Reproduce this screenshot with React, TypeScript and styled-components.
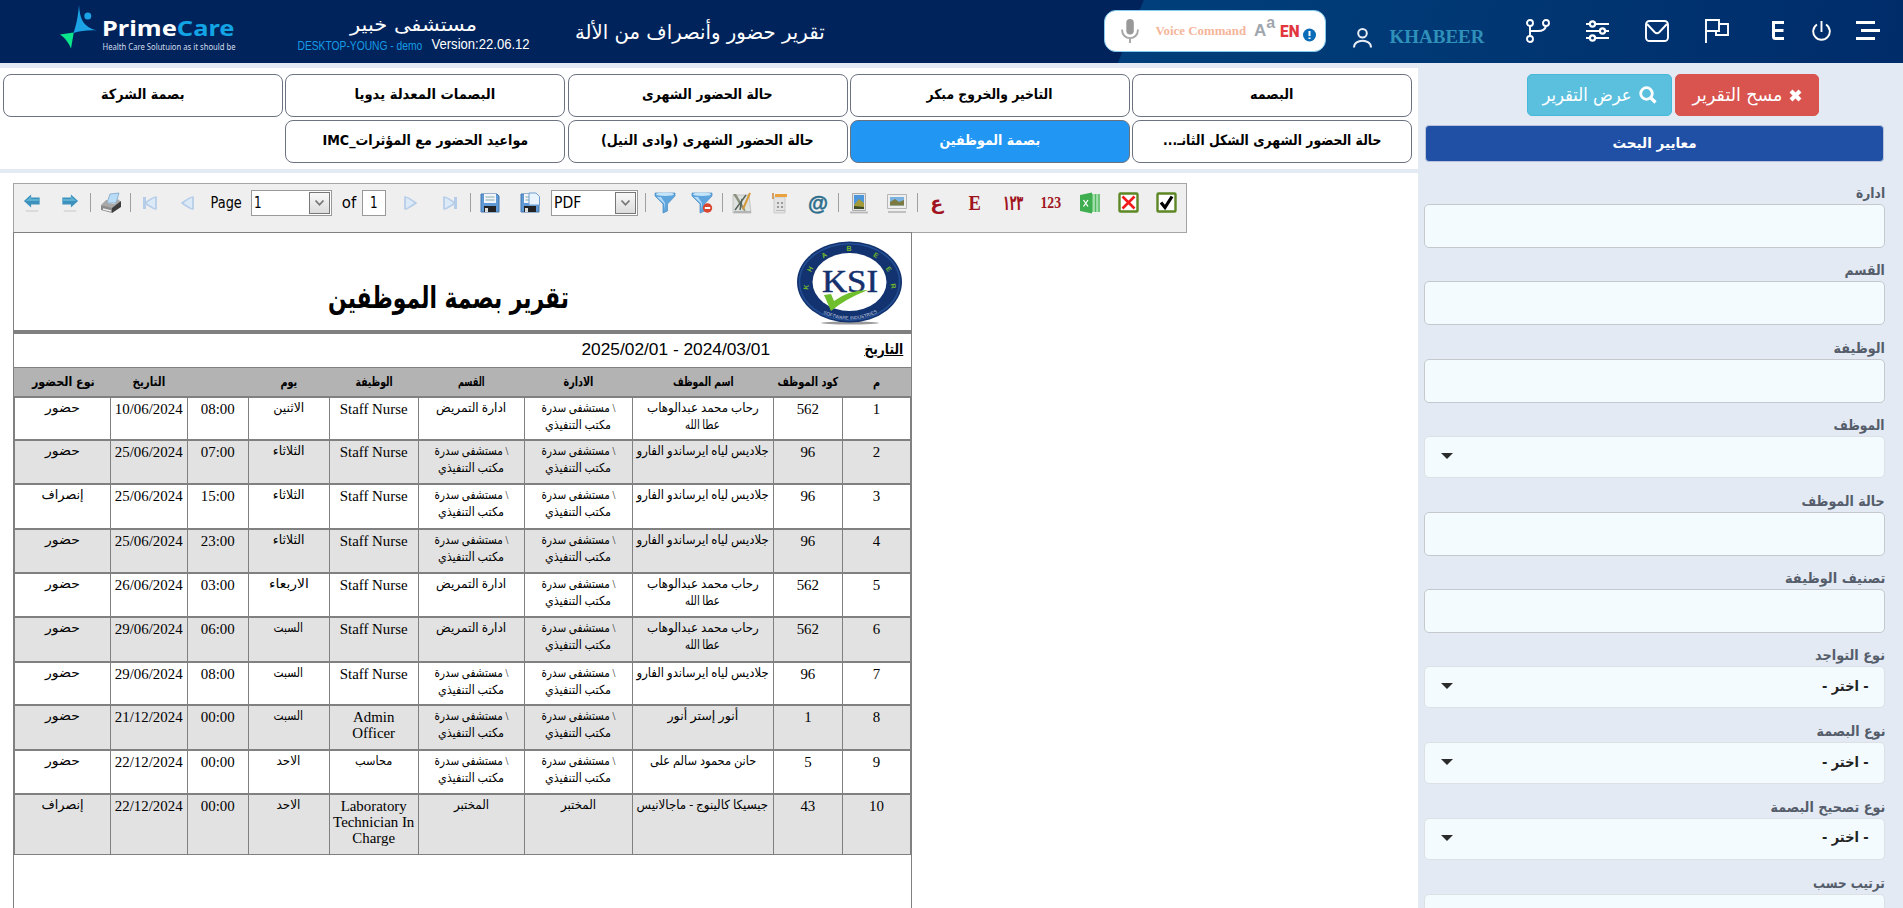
import React, { useLayoutEffect, useRef, useState } from "react";
import styled, { createGlobalStyle } from "styled-components";

const GlobalStyle = createGlobalStyle`
  * { box-sizing: border-box; }
  html, body { margin: 0; height: 100%; overflow: hidden; background: #e3eaf4; }
  body { font-family: "DejaVu Sans", sans-serif; color: #000; }
  button { font: inherit; cursor: pointer; padding: 0; }
  svg { display: block; flex: none; direction: ltr; }
`;

/* ---------- text squeezed to a given width ---------- */
const FitBox = styled.span<{ $w: number }>`
  display: inline-flex;
  justify-content: center;
  flex: none;
  width: ${(p) => p.$w}px;
  white-space: nowrap;
`;
const FitInner = styled.span`
  flex: none;
  display: inline-block;
`;
function Fit({ w, children }: { w: number; children: React.ReactNode }) {
  const ref = useRef<HTMLSpanElement>(null);
  const [scale, setScale] = useState(1);
  useLayoutEffect(() => {
    if (ref.current && ref.current.offsetWidth) setScale(w / ref.current.offsetWidth);
  }, [w]);
  return (
    <FitBox $w={w}>
      <FitInner ref={ref} style={{ transform: `scaleX(${scale})` }}>{children}</FitInner>
    </FitBox>
  );
}

/* ---------- header ---------- */
const Header = styled.header`
  height: 63px;
  display: flex;
  align-items: flex-start;
  background: linear-gradient(112.4deg, #00235c 0, #00235c 1057px, transparent 1058px),
    linear-gradient(100deg, #003f7b 1110px, #003a76 1350px, #002c6a 1880px);
  color: #fff;
`;
const Logo = styled.div`
  display: flex;
  width: 237px;
  padding-left: 59px;
  gap: 5px;
`;
const LogoText = styled.div`
  display: flex;
  flex-direction: column;
  padding-top: 13px;
  font-family: "Noto Sans", "Open Sans", sans-serif;
  strong { font-size: 22px; line-height: 28px; font-weight: 700; }
  em { color: #12a4e4; font-style: normal; }
  small { font-size: 9px; line-height: 11px; color: #d3dbe8; }
`;
const Hospital = styled.div`
  width: 233px;
  margin-left: 60px;
  padding-top: 13px;
  display: flex;
  flex-direction: column;
  align-items: center;
  font-size: 19px;
  line-height: 23px;
`;
const Versions = styled.div`
  display: flex;
  gap: 10px;
  height: 18px;
`;
const HostName = styled.span`
  color: #159ce4;
  font: 12px/20px "Liberation Sans", Arial, sans-serif;
`;
const Version = styled.span`
  font: 14px/16px "Liberation Sans", Arial, sans-serif;
`;
const PageTitle = styled.h1`
  margin: 0 279px 0 45px;
  font-size: 20px;
  font-weight: 400;
  line-height: 64px;
`;
const VoicePill = styled.div`
  width: 222px;
  height: 42px;
  margin-top: 10px;
  padding-left: 14px;
  display: flex;
  align-items: center;
  border: 1px solid #83cbef;
  border-radius: 12px;
  background: #fff;
`;
const VoiceLabel = styled.span`
  margin: 0 8px 0 14px;
  font: bold 13px/20px "Liberation Serif", serif;
  color: #f5b59a;
`;
const BigA = styled.span`
  display: flex;
  width: 26px;
  color: #9fa6ae;
  font: bold 17px/26px "Liberation Sans", sans-serif;
  sup { font-size: 16px; line-height: 10px; }
`;
const LangTag = styled.span`
  margin-right: 4px;
  color: #e2373f;
  font: 900 17px/22px Roboto, sans-serif;
`;
const User = styled.div`
  display: flex;
  margin-left: 27px;
  padding-top: 27px;
  gap: 18px;
  width: 173px;
  font: bold 18px/21px "Liberation Serif", serif;
  color: #2f90ba;
`;
const NavIcon = styled.div<{ $w: number }>`
  width: ${(p) => p.$w}px;
  padding-top: 19px;
`;

/* ---------- main frame ---------- */
const Frame = styled.div`
  display: flex;
  height: 845px;
`;
const Content = styled.main`
  width: 1418px;
  padding-top: 5px;
  display: flex;
  flex-direction: column;
  gap: 4px;
`;
const TabGrid = styled.nav`
  direction: rtl;
  height: 101px;
  padding: 6px 6px 6px 3px;
  background: #fff;
  display: grid;
  grid-template-columns: repeat(5, 1fr);
  grid-auto-rows: 43px;
  gap: 3px 2.25px;
`;
const Tab = styled.button<{ $active?: boolean }>`
  border: 1px solid #6b7280;
  border-radius: 8px;
  background: ${(p) => (p.$active ? "#2196f3" : "#fff")};
  color: ${(p) => (p.$active ? "#fff" : "#000")};
  font-size: 14px;
  font-weight: 700;
  line-height: 39px;
  padding-bottom: 2px;
`;
const Viewer = styled.section`
  flex: 1;
  background: #fff;
  padding: 10px 0 0 13px;
  min-height: 0;
`;

/* ---------- viewer toolbar ---------- */
const Toolbar = styled.div`
  width: 1174px;
  height: 50px;
  border: 1px solid #a5a5a5;
  background: #efefef;
  display: flex;
  align-items: center;
  padding-bottom: 11px;
  font: 15px/20px "DejaVu Sans", sans-serif;
`;
const Tool = styled.div<{ $w?: number }>`
  width: ${(p) => p.$w ?? 38.1}px;
  flex: none;
  display: flex;
  justify-content: center;
`;
const Sep = styled.i<{ $r?: number }>`
  flex: none;
  width: 1px;
  height: 19px;
  background: #a0a0a0;
  margin: 0 ${(p) => p.$r ?? 1}px 0 1px;
`;
const Combo = styled.div<{ $w: number; $l?: number; $r: number }>`
  flex: none;
  width: ${(p) => p.$w}px;
  height: 26px;
  margin: 0 ${(p) => p.$r}px 0 ${(p) => p.$l ?? 0}px;
  border: 1px solid #999;
  background: #fff;
  display: flex;
  justify-content: space-between;
  padding: 1px 1px 1px 2px;
  align-items: center;
`;
const ComboArrow = styled.span`
  width: 21px;
  height: 22px;
  border: 1px solid #777;
  background: linear-gradient(#f8f8f8, #dcdcdc);
  display: flex;
  align-items: center;
  justify-content: center;
`;
const PageCount = styled.div`
  width: 24px;
  height: 26px;
  border: 1px solid #999;
  background: #fff;
  text-align: center;
  line-height: 25px;
  margin: 0 6px 0 5px;
`;
const Glyph = styled.span<{ $s: number }>`
  color: #a01420;
  font: bold ${(p) => p.$s}px/18px "Liberation Serif", "DejaVu Sans", serif;
`;

/* ---------- report ---------- */
const Sheet = styled.div`
  width: 899px;
  height: 676px;
  margin-top: -1px;
  border: 1px solid #808080;
  border-bottom: 0;
  direction: rtl;
`;
const SheetHead = styled.div`
  height: 101px;
  border-bottom: 4px solid #808080;
  display: flex;
  padding: 7px 8px 0 0;
`;
const SheetTitle = styled.h2`
  margin: 34px 227px 0 0;
  font-size: 30px;
  line-height: 48px;
  font-weight: 700;
`;
const Period = styled.div`
  height: 34px;
  border-bottom: 1px solid #808080;
  display: flex;
  padding: 0 8px;
`;
const PeriodLabel = styled.span`
  font-size: 15px;
  font-weight: 700;
  line-height: 30px;
  span { text-decoration: underline; }
`;
const PeriodDates = styled.span`
  direction: ltr;
  margin-right: 94px;
  font: 17.4px/30px "Liberation Sans", Arial, sans-serif;
`;
const columns = "68px 69.3px 141px 108px 106px 89px 81px 61px 77px 1fr";
const HeadRow = styled.div`
  display: grid;
  grid-template-columns: ${columns};
  height: 28px;
  padding-left: 2px;
  background: #b3b3b3;
  text-align: center;
  font-size: 12.5px;
  font-weight: 700;
  line-height: 27px;
`;
const Body = styled.div`
  border: solid #808080;
  border-width: 0 1px 1px;
`;
const Row = styled.div<{ $alt: boolean; $h: number }>`
  display: grid;
  grid-template-columns: ${columns};
  height: ${(p) => p.$h}px;
  border-top: 2px solid #808080;
  background: ${(p) => (p.$alt ? "#e2e2e2" : "#fff")};
`;
const Cell = styled.div<{ $ar: boolean }>`
  border-left: 1px solid #808080;
  padding-top: ${(p) => (p.$ar ? 2 : 3)}px;
  display: flex;
  flex-direction: column;
  align-items: center;
  direction: ${(p) => (p.$ar ? "rtl" : "ltr")};
  font-family: "Liberation Serif", "DejaVu Sans", serif;
  font-size: ${(p) => (p.$ar ? 12.5 : 14.9)}px;
  line-height: ${(p) => (p.$ar ? 17 : 16)}px;
  white-space: nowrap;
  &:last-child { border-left: 0; }
`;

/* ---------- filter panel ---------- */
const Side = styled.aside`
  width: 485px;
  padding: 11px 18px 0 6px;
  direction: rtl;
`;
const Actions = styled.div`
  display: flex;
  gap: 3px;
  padding-right: 66px;
  height: 42px;
`;
const Action = styled.button<{ $w: number; $bg: string; $line: string }>`
  width: ${(p) => p.$w}px;
  border: 1px solid ${(p) => p.$line};
  border-radius: 5px;
  background: ${(p) => p.$bg};
  color: #fff;
  display: flex;
  align-items: center;
  justify-content: center;
  gap: 7px;
  font-size: 18px;
  line-height: 34px;
`;
const Criteria = styled.div`
  margin: 9px 1px 0;
  height: 37px;
  border: 1px solid #b9c4dc;
  border-radius: 4px;
  background: #1f50a6;
  color: #fff;
  text-align: center;
  font-size: 14px;
  font-weight: 700;
  line-height: 35px;
`;
const Fields = styled.div`
  padding-top: 19px;
`;
const Field = styled.div<{ $select: boolean }>`
  height: ${(p) => (p.$select ? 75.8 : 77.3)}px;
  color: #555d6b;
  font-size: 14px;
  font-weight: 700;
`;
const FieldLabel = styled.div`
  height: 23px;
  line-height: 25px;
`;
const Control = styled.div<{ $select: boolean }>`
  height: ${(p) => (p.$select ? 42 : 44)}px;
  border: 1px solid ${(p) => (p.$select ? "#dde1e6" : "#c5c9ce")};
  border-radius: 5px;
  background: #f3fbff;
  display: flex;
  align-items: center;
  justify-content: space-between;
  padding: 0 15px 2px 16px;
  color: #222;
  line-height: 25px;
`;
const Caret = styled.i`
  width: 0;
  border: 6px solid transparent;
  border-top-color: #2b2b2b;
  border-bottom: 0;
`;

/* ---------- drawings ---------- */
const LogoMark = () => (
  <svg width="38" height="50" viewBox="0 0 38 50">
    <path d="M20 5C21 19 24 27 38 30.5C29 30 21 31 14.5 33C17 26 19 17 20 5Z" fill="#1ba3e6" />
    <circle cx="28.8" cy="16" r="3.5" fill="#1ba3e6" />
    <path d="M1 34.5L14.8 32.5L12 48.5Q8 39 1 34.5Z" fill="#0be58c" />
  </svg>
);
const Mic = () => (
  <svg width="22" height="26" viewBox="0 0 22 26">
    <rect x="7.3" y="1" width="7.5" height="15.5" rx="3.7" fill="#999" />
    <path d="M3 11.5C3 23 19 23 19 11.5M11 20V25" fill="none" stroke="#a5a5a5" strokeWidth="1.9" />
  </svg>
);
const Line = ({ children, w = 1.9 }: { children: React.ReactNode; w?: number }) => (
  <svg width="24" height="24" viewBox="0 0 24 24" fill="none" stroke="#fff" strokeWidth={w}>{children}</svg>
);

const Arrow = ({ flip }: { flip?: boolean }) => (
  <svg width="18" height="20" viewBox="0 0 20 20" preserveAspectRatio="none">
    <g transform={flip ? "translate(20 0) scale(-1 1)" : undefined}>
      <path d="M1 8L9 1.5V4.5H18.5V11.5H9V14.5Z" fill="#3c92bd" />
      <path d="M3 8L9 3.5V6H17.5V8Z" fill="#5fb1d4" />
    </g>
    <path d="M3 18H17" stroke="#d4d4d4" strokeWidth="1.5" />
  </svg>
);
const Step = ({ dir, bar }: { dir: 1 | -1; bar?: boolean }) => (
  <svg width="18" height="18" viewBox="0 0 18 18">
    <g transform={dir < 0 ? "translate(18 0) scale(-1 1)" : undefined} fill="#dce9f7" stroke="#b5cde8" strokeWidth="1.7" strokeLinejoin="round">
      <path d="M3 3Q4 2 14 9Q4 16 3 15Z" />
      {bar && <path d="M14.5 3V15" strokeWidth="3" />}
    </g>
  </svg>
);
const Printer = () => (
  <svg width="22" height="22" viewBox="0 0 22 22">
    <path d="M7 11L10 2L19 1L16 11Z" fill="#b9dcf7" stroke="#7aa6c9" strokeWidth=".8" />
    <path d="M1 13L6 8H8L7 11L15 12L18 7L21 10L12 17Z" fill="#a8a8a8" />
    <path d="M1 13L12 16V21L1 18Z" fill="#8b8b8b" />
    <path d="M12 16L21 9V15L12 21Z" fill="#3d3d3d" />
    <path d="M3 17L11 19" stroke="#eee" strokeWidth="1.5" />
  </svg>
);
const Floppy = ({ copy }: { copy?: boolean }) => (
  <svg width="20" height="22" viewBox="0 0 20 22">
    <path d="M1 2H17L19 4V20H1Z" fill="#5f9ad6" stroke="#4576ad" />
    <path d="M4 2H16V11H4Z" fill="#f2f6fa" />
    <path d="M5.5 5H14.5M5.5 8H14.5" stroke="#8aa" />
    <path d="M4 14H16V20H4Z" fill="#222" />
    <path d="M5 16H8V20H5Z" fill="#ddd" />
    {copy && <path d="M9 1H16L19.5 4.5V13H9Z" fill="#eaf4ff" stroke="#6f9fd2" />}
  </svg>
);
const Funnel = ({ stop }: { stop?: boolean }) => (
  <svg width="22" height="23" viewBox="0 0 22 23">
    <path d="M1 2H21V5L13.5 13V20L9 22V13L1 5Z" fill="#5fa5dd" stroke="#4b8bc4" strokeWidth=".7" />
    <path d="M3 6L10 12.5V19L11 12L7 6Z" fill="#b5dbf7" />
    <ellipse cx="11" cy="3.3" rx="9" ry="1.7" fill="#c4e4f9" />
    {stop && <><circle cx="16.5" cy="17" r="4.7" fill="#d9452f" /><path d="M13.8 17H19.2" stroke="#fff" strokeWidth="2" /></>}
  </svg>
);
const Design = () => (
  <svg width="20" height="22" viewBox="0 0 20 22">
    <path d="M1 3H17L19 21H1Z" fill="#dfe3df" stroke="#a9aca9" strokeWidth=".6" />
    <path d="M1 2L11 18L14 20L12 15L4 2Z" fill="#8a917f" />
    <path d="M3 18L14 3M8 18L10 7" stroke="#57645c" strokeWidth="1.5" />
    <path d="M18 1L11 17" stroke="#d89a38" strokeWidth="2" />
    <path d="M2 20H19" stroke="#b3b3b3" strokeWidth="2" />
  </svg>
);
const Params = () => (
  <svg width="18" height="22" viewBox="0 0 18 22">
    <path d="M3 5H14V21H3Z" fill="#e3e3e3" stroke="#cbcbcb" />
    <path d="M4 3.5H16" stroke="#eaa23e" strokeWidth="3" />
    <path d="M2 1V7" stroke="#c9853a" strokeWidth="1.5" />
    <path d="M6 11H8M10 11H12M6 15H8M10 15H12" stroke="#999" strokeWidth="2" />
    <path d="M5 18.5H14" stroke="#bbb" />
  </svg>
);
const Photo = ({ wide }: { wide?: boolean }) => (
  <svg width="20" height="22" viewBox="0 0 20 22">
    {wide ? (
      <>
        <path d="M.5 2.5H19.5V16.5H.5Z" fill="#eee" stroke="#b5b5b5" />
        <path d="M3 5H17V13.5H3Z" fill="#7ab3e2" />
        <path d="M3 10L8 7L12 10L17 8V13.5H3Z" fill="#7b7a43" />
        <path d="M1 20H19" stroke="#c0c0c0" strokeWidth="2" />
      </>
    ) : (
      <>
        <path d="M3.5 1.5H16.5V18.5H3.5Z" fill="#e5e5e5" stroke="#aaa" />
        <path d="M5 3H15V17H5Z" fill="#4d96dc" />
        <path d="M5 13L10 7L15 11V17H5Z" fill="#a39b3a" />
        <path d="M5 14L15 15V17H5Z" fill="#3d4b26" />
        <path d="M1 20.5H19" stroke="#b8b8b8" strokeWidth="1.8" />
      </>
    )}
  </svg>
);
const Excel = () => (
  <svg width="22" height="22" viewBox="0 0 22 22">
    <path d="M11 2H21V20H11Z" fill="#a6dfae" />
    <path d="M13 2V20M16.5 2V20M20 2V20" stroke="#52b860" strokeWidth="1.3" />
    <path d="M1 3L13 .5V21.5L1 19Z" fill="#3fae50" />
    <path d="M4.5 8L9 14.5M9 8L4.5 14.5" stroke="#fff" strokeWidth="1.3" />
  </svg>
);
const BoxMark = ({ ok }: { ok?: boolean }) => (
  <svg width="21" height="21" viewBox="0 0 21 21">
    <rect x="1.5" y="1.5" width="18" height="18" rx="1" fill="#fff" stroke="#5c8724" strokeWidth="2.4" />
    {ok ? <path d="M5 10.5L9 15.5L16 4.5" fill="none" stroke="#000" strokeWidth="3.2" />
      : <path d="M4.5 4.5L16.5 16.5M16.5 4.5L4.5 16.5" stroke="#f21a1a" strokeWidth="2.6" />}
  </svg>
);
const Chevron = () => (
  <svg width="11" height="8" viewBox="0 0 11 8"><path d="M1.5 1.5L5.5 5.8L9.5 1.5" fill="none" stroke="#777" strokeWidth="1.8" /></svg>
);
const Seal = () => {
  const ring: [string, number, number, number][] = [
    ["K", 10, 47, -80], ["H", 14, 29, -60], ["A", 28, 15, -32], ["B", 53, 8, 0], ["E", 80, 15, 32], ["E", 93, 29, 55], ["R", 97.5, 46, 80],
  ];
  return (
    <svg width="107" height="86" viewBox="0 0 107 86">
      <ellipse cx="54" cy="83" rx="29" ry="1.5" fill="#999" />
      <ellipse cx="53.5" cy="42" rx="52.5" ry="40.5" fill="#12336f" />
      <ellipse cx="53.5" cy="42" rx="50" ry="38.3" fill="none" stroke="#244f94" strokeWidth="1.5" />
      <ellipse cx="53.5" cy="42" rx="37" ry="29" fill="#fff" />
      {ring.map(([c, x, y, r], i) => (
        <text key={i} x={x} y={y} transform={`rotate(${r} ${x} ${y})`} textAnchor="middle" dominantBaseline="central" fontSize="7" fontWeight="700" fontFamily="Liberation Sans" fill="#72b82d">{c}</text>
      ))}
      <text x="26" y="52" fontSize="31" textLength="56" lengthAdjust="spacingAndGlyphs" fontFamily="Liberation Serif" fill="#15306c" stroke="#15306c" strokeWidth=".5">KSI</text>
      <path d="M28 55L35 54L38 61Q53 50 72 50Q49 59 35 71Z" fill="#6fbe2c" />
      <path id="sealArc" d="M27 73.5Q54 86 82 72.5" fill="none" />
      <text fontSize="4.7" fontFamily="Liberation Sans" fill="#c5cfe2"><textPath href="#sealArc">SOFTWARE INDUSTRIES</textPath></text>
    </svg>
  );
};

/* ---------- data ---------- */
type T = [string, number];
const tabs: T[] = [
  ["البصمه", 43], ["التاخير والخروج مبكر", 126], ["حالة الحضور الشهرى", 131], ["البصمات المعدلة يدويا", 141], ["بصمة الشركة", 83],
  ["حالة الحضور الشهرى الشكل الثانـ...", 218], ["بصمة الموظفين", 101], ["حالة الحضور الشهرى (وادى النيل)", 213], ["مواعيد الحضور مع المؤثرات_IMC", 206],
];
const heads: T[] = [
  ["م", 7], ["كود الموظف", 61], ["اسم الموظف", 61], ["الادارة", 30], ["القسم", 27], ["الوظيفة", 37], ["يوم", 17], ["", 0], ["التاريخ", 33], ["نوع الحضور", 63],
];
const HOSP: T[] = [["\\ مستشفى سدرة", 74], ["مكتب التنفيذي", 66]];
const NURSING: T[] = [["ادارة التمريض", 70]];
const LAB: T[] = [["المختبر", 35]];
const REHAB: T[] = [["رحاب محمد عبدالوهاب", 112], ["عطا الله", 35]];
const GLADYS: T[] = [["جلاديس لياه ايرساندو الفارو", 132]];
const TUE: T[] = [["الثلاثاء", 32]];
const SAT: T[] = [["السبت", 29]];
const SUN: T[] = [["الاحد", 24]];
const IN: T[] = [["حضور", 35]];
const OUT: T[] = [["إنصراف", 42]];
type Item = string | T[];
const SN = "Staff Nurse";
const rows: Item[][] = [
  ["1", "562", REHAB, HOSP, NURSING, SN, [["الاثنين", 31]], "08:00", "10/06/2024", IN],
  ["2", "96", GLADYS, HOSP, HOSP, SN, TUE, "07:00", "25/06/2024", IN],
  ["3", "96", GLADYS, HOSP, HOSP, SN, TUE, "15:00", "25/06/2024", OUT],
  ["4", "96", GLADYS, HOSP, HOSP, SN, TUE, "23:00", "25/06/2024", IN],
  ["5", "562", REHAB, HOSP, NURSING, SN, [["الاربعاء", 40]], "03:00", "26/06/2024", IN],
  ["6", "562", REHAB, HOSP, NURSING, SN, SAT, "06:00", "29/06/2024", IN],
  ["7", "96", GLADYS, HOSP, HOSP, SN, SAT, "08:00", "29/06/2024", IN],
  ["8", "1", [["أنور إستر أنور", 71]], HOSP, HOSP, "Admin\nOfficer", SAT, "00:00", "21/12/2024", IN],
  ["9", "5", [["حانن محمود سالم على", 106]], HOSP, HOSP, [["محاسب", 37]], SUN, "00:00", "22/12/2024", IN],
  ["10", "43", [["جيسيكا كالينوج - ماجالانيس", 132]], LAB, LAB, "Laboratory\nTechnician In\nCharge", SUN, "00:00", "22/12/2024", OUT],
];
const rowHeights = [43, 44, 45, 44, 44, 45, 43, 45, 44, 61];
const fields: { label: string; w: number; select?: boolean; value?: boolean }[] = [
  { label: "ادارة", w: 29 }, { label: "القسم", w: 40 }, { label: "الوظيفة", w: 51 },
  { label: "الموظف", w: 51, select: true }, { label: "حالة الموظف", w: 83 }, { label: "تصنيف الوظيفة", w: 100 },
  { label: "نوع التواجد", w: 70, select: true, value: true }, { label: "نوع البصمة", w: 69, select: true, value: true },
  { label: "نوع تصحيح البصمة", w: 115, select: true, value: true }, { label: "ترتيب حسب", w: 72, select: true },
];

export default function App() {
  return (
    <>
      <GlobalStyle />
      <Header>
        <Logo>
          <LogoMark />
          <LogoText>
            <strong><Fit w={133}>Prime<em>Care</em></Fit></strong>
            <small><Fit w={133}>Health Care Solutuion as it should be</Fit></small>
          </LogoText>
        </Logo>
        <Hospital>
          <Fit w={127}>مستشفى خبير</Fit>
          <Versions>
            <HostName><Fit w={125}>DESKTOP-YOUNG - demo</Fit></HostName>
            <Version><Fit w={98}>Version:22.06.12</Fit></Version>
          </Versions>
        </Hospital>
        <PageTitle><Fit w={250}>تقرير حضور وأنصراف من الألة</Fit></PageTitle>
        <VoicePill>
          <Mic />
          <VoiceLabel><Fit w={91}>Voice Command</Fit></VoiceLabel>
          <BigA>A<sup>a</sup></BigA>
          <LangTag><Fit w={19}>EN</Fit></LangTag>
          <svg width="13" height="22" viewBox="0 0 13 22"><circle cx="6.5" cy="15" r="6.5" fill="#0b6db8" /><path d="M6.5 11V16M6.5 17.5V19" stroke="#fff" strokeWidth="2" /></svg>
        </VoicePill>
        <User>
          <svg width="19" height="21" viewBox="0 0 19 21" fill="none" stroke="#e8eef6" strokeWidth="2"><circle cx="9.5" cy="6.3" r="4.3" /><path d="M1 20.5C1 11.5 18 11.5 18 20.5" /></svg>
          <Fit w={95}>KHABEER</Fit>
        </User>
        <NavIcon $w={60}><Line><circle cx="4" cy="4" r="3" /><circle cx="4" cy="20" r="3" /><circle cx="20" cy="4" r="3" /><path d="M4 7V17M4 12H12Q19 12 20 7" /></Line></NavIcon>
        <NavIcon $w={59}><Line w={2.2}><path d="M0 5H4M9 5H23M0 12H14M19 12H23M0 19H4M9 19H23" /><circle cx="6.5" cy="5" r="2.6" /><circle cx="16.5" cy="12" r="2.6" /><circle cx="6.5" cy="19" r="2.6" /></Line></NavIcon>
        <NavIcon $w={60}><Line><rect x="1" y="2" width="22" height="20" rx="3.5" /><path d="M2 5L9.5 13Q12 15.5 14.5 13L22 5" /></Line></NavIcon>
        <NavIcon $w={65}><Line><path d="M1 24V1H14V12H1M14 5H23V16H11V12" /></Line></NavIcon>
        <NavIcon $w={42}><Line w={3}><path d="M14 3.5H3.5M3.5 2V17.5Q3.5 19.5 5.5 19.5H14M3 11.5H13.5" /></Line></NavIcon>
        <NavIcon $w={44}><Line><path d="M5 5.5A8.3 8.3 0 1 0 14 5.5M9.5 2V13" /></Line></NavIcon>
        <NavIcon $w={24}><Line w={2.8}><path d="M0 3.5H19M5 11.5H24M0 19.5H19" /></Line></NavIcon>
      </Header>
      <Frame>
        <Content>
          <TabGrid>
            {tabs.map(([t, w], i) => <Tab key={t} $active={i === 6}><Fit w={w}>{t}</Fit></Tab>)}
          </TabGrid>
          <Viewer>
            <Toolbar>
              <Tool $w={36}><Arrow /></Tool>
              <Tool $w={39}><Arrow flip /></Tool>
              <Sep /><Tool $w={37}><Printer /></Tool><Sep />
              <Tool $w={36}><Step dir={-1} bar /></Tool>
              <Tool $w={38}><Step dir={-1} /></Tool>
              <Tool $w={40}><Fit w={31}>Page</Fit></Tool>
              <Combo $w={81} $l={5} $r={9}><Fit w={8}>1</Fit><ComboArrow><Chevron /></ComboArrow></Combo>
              <Tool $w={16}><Fit w={14}>of</Fit></Tool>
              <PageCount><Fit w={8}>1</Fit></PageCount>
              <Tool><Step dir={1} /></Tool>
              <Tool $w={39}><Step dir={1} bar /></Tool>
              <Sep />
              <Tool $w={36}><Floppy /></Tool>
              <Tool $w={43}><Floppy copy /></Tool>
              <Combo $w={87} $r={6}><Fit w={27}>PDF</Fit><ComboArrow><Chevron /></ComboArrow></Combo>
              <Sep $r={0} />
              <Tool $w={37}><Funnel /></Tool><Tool><Funnel stop /></Tool>
              <Sep $r={0} />
              <Tool><Design /></Tool><Tool><Params /></Tool>
              <Tool>
                <svg width="22" height="22" viewBox="0 0 22 22"><text x="11" y="17.5" textAnchor="middle" fontSize="21" fontWeight="700" fontFamily="Liberation Sans" fill="#2c6d8c" stroke="#2c6d8c" strokeWidth=".5" textLength="20" lengthAdjust="spacingAndGlyphs">@</text></svg>
              </Tool>
              <Sep $r={0} />
              <Tool><Photo /></Tool><Tool><Photo wide /></Tool>
              <Sep $r={0} />
              <Tool><Glyph $s={19}><Fit w={13}>ع</Fit></Glyph></Tool>
              <Tool><Glyph $s={20}><Fit w={12}>E</Fit></Glyph></Tool>
              <Tool><Glyph $s={21}><Fit w={20}>١٢٣</Fit></Glyph></Tool>
              <Tool><Glyph $s={17}><Fit w={21}>123</Fit></Glyph></Tool>
              <Tool $w={39}><Excel /></Tool><Tool><BoxMark /></Tool><Tool><BoxMark ok /></Tool>
            </Toolbar>
            <Sheet>
              <SheetHead>
                <Seal />
                <SheetTitle><Fit w={241}>تقرير بصمة الموظفين</Fit></SheetTitle>
              </SheetHead>
              <Period>
                <PeriodLabel><Fit w={39}>التاريخ</Fit></PeriodLabel>
                <PeriodDates><Fit w={189}>2025/02/01 - 2024/03/01</Fit></PeriodDates>
              </Period>
              <HeadRow>{heads.map(([t, w], i) => <div key={i}>{t && <Fit w={w}>{t}</Fit>}</div>)}</HeadRow>
              <Body>
                {rows.map((r, i) => (
                  <Row key={i} $alt={i % 2 === 1} $h={rowHeights[i]}>
                    {r.map((c, j) => typeof c === "string"
                      ? <Cell key={j} $ar={false}>{c.split("\n").map((l) => <span key={l}>{l}</span>)}</Cell>
                      : <Cell key={j} $ar>{c.map(([t, w]) => <Fit key={t} w={w}>{t}</Fit>)}</Cell>)}
                  </Row>
                ))}
              </Body>
            </Sheet>
          </Viewer>
        </Content>
        <Side>
          <Actions>
            <Action $w={144} $bg="#d9534f" $line="#d9534f">
              <svg width="13" height="13" viewBox="0 0 13 13"><path d="M2 2L11 11M11 2L2 11" stroke="#fff" strokeWidth="4.2" /></svg>
              <Fit w={90}>مسح التقرير</Fit>
            </Action>
            <Action $w={145} $bg="#5bc0de" $line="#46b8da">
              <svg width="18" height="18" viewBox="0 0 18 18" fill="none" stroke="#fff"><circle cx="7.5" cy="7.5" r="5.8" strokeWidth="2.8" /><path d="M11.5 11.5L16.5 16.5" strokeWidth="3.2" /></svg>
              <Fit w={89}>عرض التقرير</Fit>
            </Action>
          </Actions>
          <Criteria><Fit w={84}>معايير البحث</Fit></Criteria>
          <Fields>
            {fields.map((f) => (
              <Field key={f.label} $select={!!f.select}>
                <FieldLabel><Fit w={f.w}>{f.label}</Fit></FieldLabel>
                <Control $select={!!f.select}>
                  {f.select && <><span>{f.value && <Fit w={47}>- اختر -</Fit>}</span><Caret /></>}
                </Control>
              </Field>
            ))}
          </Fields>
        </Side>
      </Frame>
    </>
  );
}
